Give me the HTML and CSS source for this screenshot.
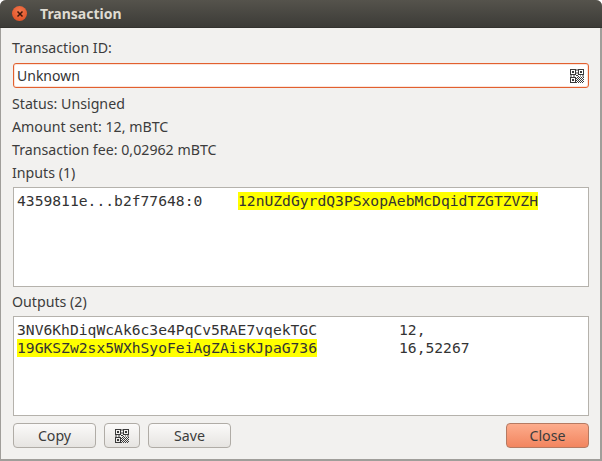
FILE: index.html
```html
<!DOCTYPE html>
<html lang="en">
<head>
<meta charset="utf-8">
<title>Transaction</title>
<link rel="stylesheet" href="styles.css">
</head>
<body>
<svg class="defs" width="0" height="0" aria-hidden="true">
  <defs>
    <g id="qr" fill="#3a3a3a">
      <path fill-rule="evenodd" d="M0 0h6v6H0zM1 1v4h4V1zM8 0h6v6H8zM9 1v4h4V1zM0 8h6v6H0zM1 9v4h4V9z"/>
      <path d="M2 2h2v2H2zM10 2h2v2h-2zM2 10h2v2H2zM6.500 0h1v2h-1zM6.500 3h1v2h-1zM0 6.500h2v1H0zM3 6.500h2v1H3zM6 6h2v1H6zM8 7h1v1H8zM10 6.500h1v1h-1zM12 6.500h2v1h-2zM7 8h1v1H7zM9 8h1v1H9zM11 8h1v1h-1zM13 8h1v1h-1zM6 9h1v1H6zM8 9h1v1H8zM10 9h1v1h-1zM12 9h1v1h-1zM7 10h1v1H7zM9 10h1v1H9zM11 10h1v1h-1zM13 10h1v1h-1zM6 11h1v1H6zM8 11h1v1H8zM10 11h1v1h-1zM12 11h1v1h-1zM7 12h1v1H7zM9 12h1v1H9zM11 12h1v1h-1zM13 12h1v1h-1zM6 13h1v1H6zM8 13h1v1H8zM10 13h1v1h-1zM12 13h1v1h-1z"/>
    </g>
  </defs>
</svg>
<div class="window">
  <header class="titlebar">
    <span class="close-dot">
      <svg width="8" height="8" viewBox="0 0 8 8"><path d="M1.500 1.500l5 5M6.500 1.500l-5 5" stroke="#3d1509" stroke-width="1.500" fill="none"/></svg>
    </span>
    <span class="title">Transaction</span>
  </header>
  <main class="content">
    <div class="label first">Transaction ID:</div>
    <div class="idfield">
      <span>Unknown</span>
      <svg class="qr" viewBox="0 0 14 14"><use href="#qr"/></svg>
    </div>
    <div class="label status">Status: Unsigned</div>
    <div class="label amount">Amount sent: 12, mBTC</div>
    <div class="label fee">Transaction fee: 0,02962 mBTC</div>
    <div class="label inputs-label">Inputs (1)</div>
    <div class="box inputs">
      <div class="row"><span class="col-prev">4359811e...b2f77648:0</span><span class="hl">12nUZdGyrdQ3PSxopAebMcDqidTZGTZVZH</span></div>
    </div>
    <div class="label outputs-label">Outputs (2)</div>
    <div class="box outputs">
      <div class="row"><span class="col-addr">3NV6KhDiqWcAk6c3e4PqCv5RAE7vqekTGC</span><span>12,</span></div>
      <div class="row"><span class="col-addr"><span class="hl">19GKSZw2sx5WXhSyoFeiAgZAisKJpaG736</span></span><span>16,52267</span></div>
    </div>
    <footer class="buttons">
      <button class="btn wide">Copy</button>
      <button class="btn narrow"><svg class="qr" viewBox="0 0 14 14"><use href="#qr"/></svg></button>
      <button class="btn wide">Save</button>
      <button class="btn wide close">Close</button>
    </footer>
  </main>
</div>
</body>
</html>
```
FILE: styles.css
```css
* { box-sizing: border-box; }
html, body { margin: 0; padding: 0; }
body {
  width: 602px;
  height: 461px;
  background: #fff;
  overflow: hidden;
  font-family: "Noto Sans", "Open Sans", sans-serif;
  font-size: 14.2px;
  color: #3c3c3c;
}
.defs { position: absolute; }
.window {
  width: 602px;
  height: 461px;
  display: flex;
  flex-direction: column;
  border-radius: 6px 6px 0 0;
  overflow: hidden;
  background: #a09e9a;
}
.titlebar {
  height: 28px;
  flex: none;
  display: flex;
  align-items: center;
  padding-left: 12px;
  background: linear-gradient(#55534c, #3c3b37);
  border-bottom: 1px solid #33322e;
}
.close-dot {
  width: 15px;
  height: 15px;
  border-radius: 50%;
  background: radial-gradient(circle at 50% 35%, #f2784e, #dc4a1e);
  display: flex;
  align-items: center;
  justify-content: center;
}
.title {
  margin-left: 13px;
  font-weight: 700;
  font-size: 14px;
  color: #dfdbd2;
}
.content {
  flex: 1;
  margin: 0 2px 2px 1px;
  padding: 0 11px 0 12px;
  background: #f2f1ef;
  display: flex;
  flex-direction: column;
}
.label { height: 18px; line-height: 18px; margin-left: -1px; }
.first { margin-top: 11px; }
.idfield {
  margin-top: 6px;
  height: 25px;
  background: #fff;
  border: 1px solid #e2602f;
  border-radius: 3px;
  box-shadow: inset 0 0 0 1px #fbe4da;
  display: flex;
  align-items: center;
  justify-content: space-between;
  padding: 0 4px 0 3px;
  font-size: 14px;
  color: #333;
}
.qr { width: 14px; height: 14px; display: block; }
.status { margin-top: 7px; }
.amount { margin-top: 5px; }
.fee { margin-top: 5px; }
.inputs-label { margin-top: 5px; }
.box {
  background: #fff;
  border: 1px solid #b5b2ac;
  padding: 4px 3px;
  font-family: "DejaVu Sans Mono", "Liberation Mono", monospace;
  font-size: 14.67px;
  color: #333;
}
.inputs { margin-top: 5px; height: 100px; }
.outputs-label { margin-top: 6px; }
.outputs { margin-top: 5px; height: 100px; }
.row { display: flex; height: 18px; line-height: 18px; }
.col-prev { width: 221px; }
.col-addr { width: 382px; flex: none; }
.hl { background: #ffff00; display: inline-block; height: 18px; }
.buttons {
  margin-top: 7px;
  display: flex;
  gap: 8px;
  align-items: center;
}
.btn {
  height: 25px;
  border: 1px solid #b0aca6;
  border-radius: 4px;
  background: linear-gradient(#fbfaf9, #e6e4e1);
  font: inherit;
  font-size: 14.2px;
  color: #3c3c3c;
  display: flex;
  align-items: center;
  justify-content: center;
  padding: 0;
}
.wide { width: 83px; }
.narrow { width: 36px; }
.close {
  margin-left: auto;
  background: linear-gradient(#fdac8c, #f2855f);
  border-color: #b57a62;
}
```
